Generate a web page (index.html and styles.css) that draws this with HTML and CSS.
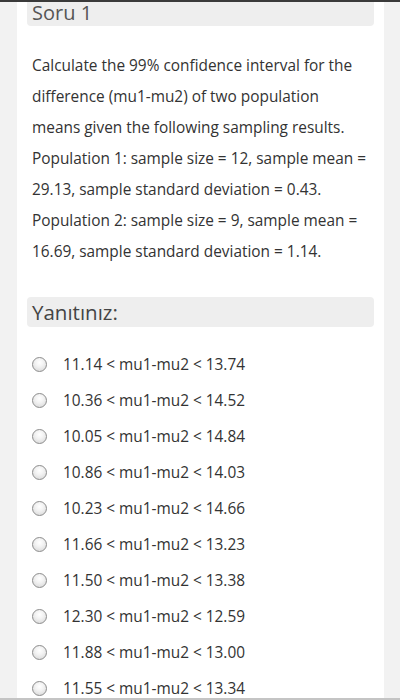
FILE: index.html
```html
<!DOCTYPE html>
<html>
<head>
<meta charset="utf-8">
<link rel="stylesheet" href="styles.css">
</head>
<body>
<div class="frame">
  <div class="card">
    <div class="head">Soru 1</div>
    <p class="question">Calculate the 99% confidence interval for the difference (mu1-mu2) of two population means given the following sampling results. Population 1: sample size = 12, sample mean = 29.13, sample standard deviation = 0.43. Population 2: sample size = 9, sample mean = 16.69, sample standard deviation = 1.14.</p>
    <div class="answer-head">Yanıtınız:</div>
    <ul class="options">
      <li><span class="radio"></span><span>11.14 &lt; mu1-mu2 &lt; 13.74</span></li>
      <li><span class="radio"></span><span>10.36 &lt; mu1-mu2 &lt; 14.52</span></li>
      <li><span class="radio"></span><span>10.05 &lt; mu1-mu2 &lt; 14.84</span></li>
      <li><span class="radio"></span><span>10.86 &lt; mu1-mu2 &lt; 14.03</span></li>
      <li><span class="radio"></span><span>10.23 &lt; mu1-mu2 &lt; 14.66</span></li>
      <li><span class="radio"></span><span>11.66 &lt; mu1-mu2 &lt; 13.23</span></li>
      <li><span class="radio"></span><span>11.50 &lt; mu1-mu2 &lt; 13.38</span></li>
      <li><span class="radio"></span><span>12.30 &lt; mu1-mu2 &lt; 12.59</span></li>
      <li><span class="radio"></span><span>11.88 &lt; mu1-mu2 &lt; 13.00</span></li>
      <li><span class="radio"></span><span>11.55 &lt; mu1-mu2 &lt; 13.34</span></li>
    </ul>
  </div>
</div>
</body>
</html>
```

FILE: styles.css
```css
html, body {
  margin: 0;
  padding: 0;
  background: #ffffff;
}
body {
  font-family: "Open Sans", "Liberation Sans", sans-serif;
  color: #333;
}
.frame {
  width: 400px;
  height: 700px;
  box-sizing: border-box;
  background: #f2f2f2;
  border-top: 2px solid #3a3a3a;
  border-bottom: 2px solid #c4c4c4;
  padding-left: 17px;
  overflow: hidden;
}
.card {
  width: 367px;
  height: 100%;
  background: #fff;
  padding: 0 10px;
  box-sizing: border-box;
}
.head {
  background: #eeeeee;
  height: 24px;
  border-radius: 0 0 4px 4px;
  padding-left: 5px;
  font-size: 20px;
  line-height: 22px;
  color: #555;
}
.question {
  margin: 24px 0 0;
  padding: 0 7px 0 5px;
  font-size: 15.4px;
  line-height: 31px;
  color: #333;
}
.answer-head {
  margin-top: 30px;
  height: 30px;
  background: #eeeeee;
  border-radius: 4px;
  padding-left: 5px;
  font-size: 20.5px;
  line-height: 30px;
  color: #444;
}
.options {
  list-style: none;
  margin: 19px 0 0;
  padding: 0 0 0 5px;
}
.options li {
  height: 36px;
  display: flex;
  align-items: center;
  gap: 16px;
  font-size: 15.4px;
  color: #333;
}
.radio {
  width: 15px;
  height: 15px;
  box-sizing: border-box;
  border-radius: 50%;
  border: 1px solid #8c8c8c;
  background: radial-gradient(circle at 50% 35%, #ffffff 0%, #f2f2f2 40%, #d4d4d4 100%);
  flex: none;
}
```
